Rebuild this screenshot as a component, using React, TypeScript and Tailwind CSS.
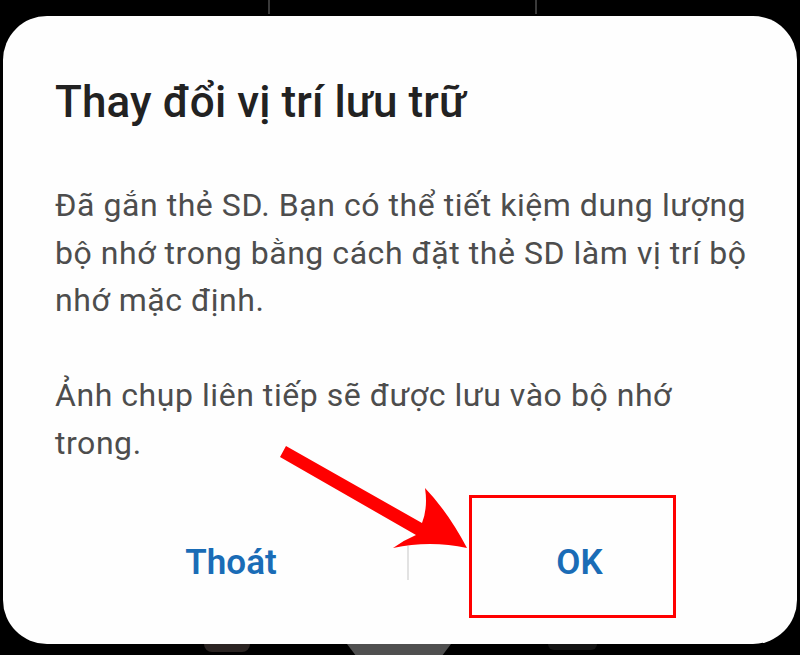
/*  App.tsx
    Storage location dialog (SD card) with red callout over the OK button
    ──────────────────────────────────────────────────────── */

const FONT = { fontFamily: 'Roboto, "Noto Sans", "Liberation Sans", sans-serif' };

export default function App() {
  return (
    <div className="relative w-[800px] h-[655px] bg-black flex flex-col overflow-hidden" style={FONT}>
      {/* top edge of the phone behind the dialog */}
      <div className="h-[16px] flex items-start shrink-0">
        <div className="ml-[268px] w-[2px] h-[14px] bg-[#3a3a3a]" />
        <div className="ml-[265px] w-[2px] h-[14px] bg-[#3a3a3a]" />
      </div>

      {/* Dialog card */}
      <div className="mx-[3px] h-[628px] shrink-0 rounded-[44px] bg-[#fefefe] pl-[52px] pr-[47px] pt-[60px] flex flex-col">
        <h1 className="text-[44px] leading-[52px] font-medium text-[#222222] tracking-[0.1px]">
          Thay đổi vị trí lưu trữ
        </h1>

        <div className="mt-[54px] text-[32px] leading-[47.5px] text-[#4d4d4d] tracking-[0.55px] whitespace-nowrap">
          <p>
            Đã gắn thẻ SD. Bạn có thể tiết kiệm dung lượng
            <br />
            bộ nhớ trong bằng cách đặt thẻ SD làm vị trí bộ
            <br />
            nhớ mặc định.
          </p>
          <p className="mt-[47.5px]">
            Ảnh chụp liên tiếp sẽ được lưu vào bộ nhớ
            <br />
            trong.
          </p>
        </div>

        {/* Actions */}
        <div className="mt-[51px] h-[90px] flex items-center">
          <button className="w-[352px] text-[35px] leading-[38px] font-semibold text-[#1a6cb6]">Thoát</button>
          <div className="w-[2px] h-[34px] bg-[#e2e2e2]" />
          <button className="flex-1 text-[35px] leading-[38px] font-semibold text-[#1a6cb6]">OK</button>
        </div>
      </div>

      {/* bottom edge of the phone */}
      <div className="h-[11px] flex items-start shrink-0">
        <div className="ml-[204px] w-[46px] h-[8px] rounded-b-full bg-[#2b2422]" />
        <div className="ml-[97px] w-[104px] h-[11px] bg-[#4f4f4f] [clip-path:polygon(0_0,100%_0,92%_100%,8%_100%)]" />
        <div className="ml-[97px] w-[49px] h-[6px] rounded-b-full bg-[#141414]" />
      </div>

      {/* Highlight over the OK button */}
      <div className="absolute left-[469px] top-[495px] w-[207px] h-[123px] border-[3px] border-[#ff0000]" />

      {/* Red pointer arrow */}
      <svg className="absolute left-0 top-0" width="800" height="655" viewBox="0 0 800 655">
        <path
          d="M467 548 Q448 512 425 488 Q428 508 422 523 L286 446 L280 457 L416 535 Q404 540 393 548 Q430 540 467 548 Z"
          fill="#ff0000"
        />
      </svg>
    </div>
  );
}
